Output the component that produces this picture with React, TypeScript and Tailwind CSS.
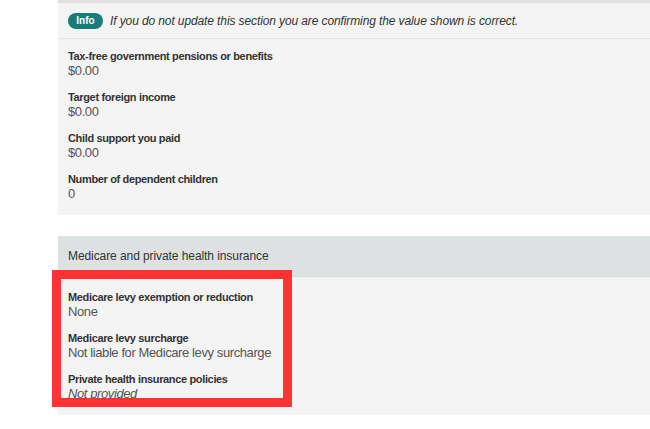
type Field = {
  label: string;
  value: string;
  italic?: boolean;
};

const incomeFields: Field[] = [
  { label: "Tax-free government pensions or benefits", value: "$0.00" },
  { label: "Target foreign income", value: "$0.00" },
  { label: "Child support you paid", value: "$0.00" },
  { label: "Number of dependent children", value: "0" },
];

const medicareFields: Field[] = [
  { label: "Medicare levy exemption or reduction", value: "None" },
  { label: "Medicare levy surcharge", value: "Not liable for Medicare levy surcharge" },
  { label: "Private health insurance policies", value: "Not provided", italic: true },
];

function FieldList({ fields }: { fields: Field[] }) {
  return (
    <div className="flex flex-col gap-[11px] px-[10px]">
      {fields.map((field) => (
        <div key={field.label}>
          <p className="text-[11px] font-bold leading-[14px] tracking-[-0.35px] text-[#333]">{field.label}</p>
          <p
            className={`text-[13px] leading-[16px] tracking-[-0.4px] text-[#555] ${field.italic ? "italic" : ""}`}
          >
            {field.value}
          </p>
        </div>
      ))}
    </div>
  );
}

export default function App() {
  return (
    <div
      className="relative h-[429px] w-[650px] overflow-hidden bg-white"
      style={{ fontFamily: '"Liberation Sans", Arial, sans-serif' }}
    >
      <section className="ml-[58px] bg-[#f4f4f4] pb-[13px]">
        <div className="h-[3px] bg-[#dde1e2]" />
        <div className="flex h-[36px] items-center gap-[7px] border-b border-[#e4e4e4] px-[10px]">
          <span className="flex h-[16px] w-[35px] items-center justify-center rounded-full bg-[#187d7a] text-[10px] font-bold text-white">
            Info
          </span>
          <p className="text-[12px] italic tracking-[-0.11px] text-[#333]">
            If you do not update this section you are confirming the value shown is correct.
          </p>
        </div>
        <div className="pt-[10px]">
          <FieldList fields={incomeFields} />
        </div>
      </section>

      <section className="ml-[58px] mt-[21px] bg-[#f4f4f4] pb-[13px]">
        <div className="flex h-[41px] items-center border-b border-[#d3d8da] bg-[#dde1e2] px-[10px]">
          <h2 className="text-[12px] tracking-[-0.08px] text-[#333]">Medicare and private health insurance</h2>
        </div>
        <div className="pt-[13px]">
          <FieldList fields={medicareFields} />
        </div>
      </section>

      <div className="pointer-events-none absolute left-[52px] top-[270px] h-[137px] w-[240px] border-[9px] border-[#ff3333]" />
    </div>
  );
}
